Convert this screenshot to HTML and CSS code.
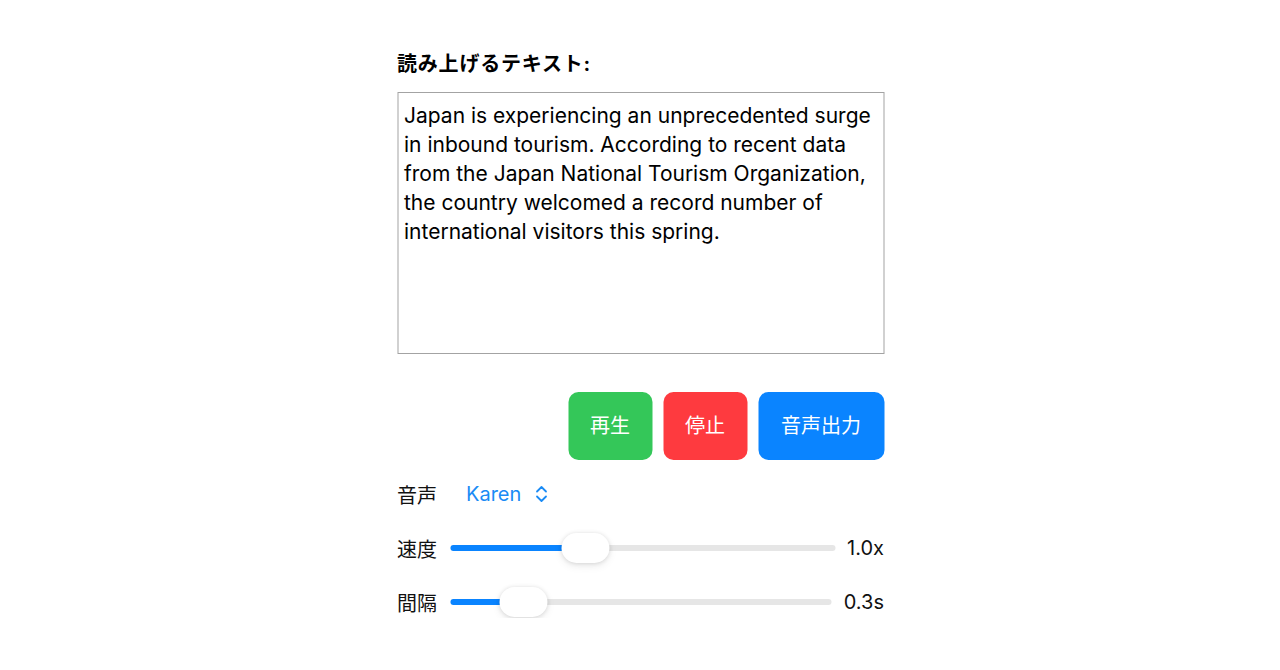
FILE: index.html
```html
<!DOCTYPE html>
<html lang="ja">
<head>
<meta charset="utf-8">
<title>読み上げ</title>
<link rel="stylesheet" href="styles.css">
</head>
<body>
<main class="panel">
  <h1 class="title">読み上げるテキスト:</h1>
  <textarea class="text" readonly>Japan is experiencing an unprecedented surge in inbound tourism. According to recent data from the Japan National Tourism Organization, the country welcomed a record number of international visitors this spring.</textarea>
  <div class="buttons">
    <button class="btn btn-play">再生</button>
    <button class="btn btn-stop">停止</button>
    <button class="btn btn-export">音声出力</button>
  </div>
  <div class="settings">
    <div class="row">
      <span class="label">音声</span>
      <span class="select">Karen
        <svg class="chev" width="14" height="18" viewBox="0 0 14 18" fill="none" stroke="currentColor" stroke-width="1.8" stroke-linecap="round" stroke-linejoin="round"><path d="M2.5 6.5 7 2l4.5 4.5"/><path d="M2.5 11.5 7 16l4.5-4.5"/></svg>
      </span>
    </div>
    <div class="row">
      <span class="label">速度</span>
      <div class="track" style="--p:0.331"><div class="fill"></div><div class="thumb"></div></div>
      <span class="value">1.0x</span>
    </div>
    <div class="row">
      <span class="label">間隔</span>
      <div class="track" style="--p:0.148"><div class="fill"></div><div class="thumb"></div></div>
      <span class="value">0.3s</span>
    </div>
  </div>
</main>
</body>
</html>
```
FILE: styles.css
```css
html, body {
  margin: 0;
  padding: 0;
  background: #ffffff;
}
body {
  font-family: Inter, "Noto Sans CJK JP", sans-serif;
  color: #111111;
}
.panel {
  width: 487px;
  margin: 0 auto;
  padding-top: 52px;
  display: flex;
  flex-direction: column;
  transform: translateX(0.5px);
}
.title {
  margin: 0;
  font-size: 20px;
  line-height: 24px;
  font-weight: bold;
  letter-spacing: 0.8px;
  color: #000;
}
.text {
  margin-top: 16px;
  box-sizing: border-box;
  width: 487px;
  height: 262px;
  border: 1px solid #a3a3a3;
  border-radius: 0;
  padding: 8px 6px;
  font-family: Inter, "Noto Sans CJK JP", sans-serif;
  font-size: 21px;
  line-height: 29px;
  color: #000;
  resize: none;
  outline: none;
  overflow: hidden;
}
.buttons {
  margin-top: 38px;
  display: flex;
  justify-content: flex-end;
  gap: 11px;
}
.btn {
  height: 68px;
  padding: 0 22px;
  border: none;
  border-radius: 10px;
  color: #fff;
  font-family: Inter, "Noto Sans CJK JP", sans-serif;
  font-size: 20px;
  line-height: 24px;
}
.btn-play { background: #34c759; }
.btn-stop { background: #fe3a3f; }
.btn-export { background: #0a84ff; padding: 0 23px; }
.settings {
  margin-top: 18px;
  display: flex;
  flex-direction: column;
  gap: 22px;
}
.row {
  height: 32px;
  display: flex;
  align-items: center;
  gap: 12px;
  font-size: 20px;
}
.label {
  width: 40px;
  flex: none;
  margin-right: 1px;
}
.select {
  margin-left: 16px;
  color: #1a8bf5;
  display: flex;
  align-items: center;
  gap: 13px;
}
.chev {
  display: block;
}
.track {
  position: relative;
  flex: 1;
  height: 6px;
  border-radius: 3px;
  background: #e6e6e6;
}
.fill {
  position: absolute;
  left: 0;
  top: 0;
  bottom: 0;
  width: calc(24px + (100% - 48px) * var(--p));
  border-radius: 3px;
  background: #0a84ff;
}
.thumb {
  position: absolute;
  top: 50%;
  left: calc((100% - 48px) * var(--p));
  width: 48px;
  height: 30px;
  margin-top: -15px;
  border-radius: 15px;
  background: #fff;
  box-shadow: 0 0.5px 4px rgba(0, 0, 0, 0.12), 0 3px 8px rgba(0, 0, 0, 0.08);
}
.value {
  flex: none;
}
```
